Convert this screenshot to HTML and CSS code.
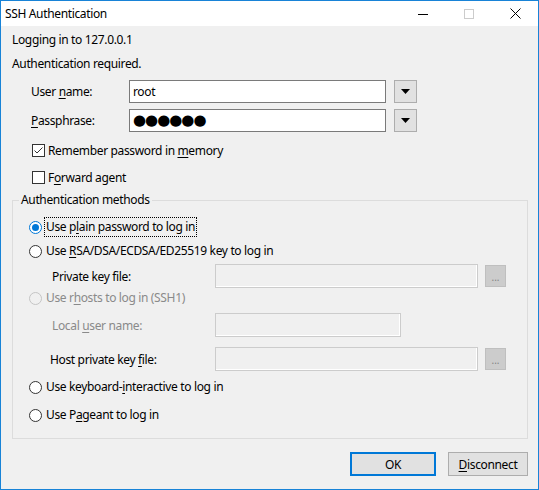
FILE: index.html
```html
<!DOCTYPE html>
<html lang="en">
<head>
    <meta charset="UTF-8">
    <title>SSH Authentication</title>
    <link rel="stylesheet" href="styles.css">
</head>
<body>
    <div class="window">
        <div class="titlebar">
            <span class="title">SSH Authentication</span>
            <div class="caption-btns">
                <span class="caption-btn">
                    <svg width="10" height="10" viewBox="0 0 10 10"><line x1="0" y1="5.5" x2="10" y2="5.5" stroke="#000" stroke-width="1"/></svg>
                </span>
                <span class="caption-btn">
                    <svg width="10" height="10" viewBox="0 0 10 10"><rect x="0.5" y="0.5" width="9" height="9" fill="none" stroke="#cccccc" stroke-width="1"/></svg>
                </span>
                <span class="caption-btn">
                    <svg width="11" height="11" viewBox="0 0 11 11"><path d="M0.5 0.5 L10.5 10.5 M10.5 0.5 L0.5 10.5" stroke="#000" stroke-width="1"/></svg>
                </span>
            </div>
        </div>

        <div class="content">
            <p class="info">Logging in to 127.0.0.1</p>
            <p class="info">Authentication required.</p>

            <div class="field-row">
                <label class="field-label">User <u>n</u>ame:</label>
                <div class="text-box">root</div>
                <span class="drop-btn"><svg width="9" height="5" viewBox="0 0 9 5"><polygon points="0,0 9,0 4.5,5" fill="#000"/></svg></span>
            </div>
            <div class="field-row second">
                <label class="field-label"><u>P</u>assphrase:</label>
                <div class="text-box secret">●●●●●●</div>
                <span class="drop-btn"><svg width="9" height="5" viewBox="0 0 9 5"><polygon points="0,0 9,0 4.5,5" fill="#000"/></svg></span>
            </div>

            <div class="check-row remember">
                <svg class="check" width="13" height="13" viewBox="0 0 13 13"><rect x="0.5" y="0.5" width="12" height="12" fill="#fff" stroke="#333"/><polyline points="2.5,6.5 5,9 10.5,3.5" fill="none" stroke="#333" stroke-width="1"/></svg>
                <span>Remember password in <u>m</u>emory</span>
            </div>
            <div class="check-row forward">
                <svg class="check" width="13" height="13" viewBox="0 0 13 13"><rect x="0.5" y="0.5" width="12" height="12" fill="#fff" stroke="#333"/></svg>
                <span>F<u>o</u>rward agent</span>
            </div>

            <fieldset class="methods">
                <legend>Authentication methods</legend>

                <div class="radio-row r-plain">
                    <svg class="radio" width="13" height="13" viewBox="0 0 13 13"><circle cx="6.5" cy="6.5" r="6" fill="#fff" stroke="#0078d7"/><circle cx="6.5" cy="6.5" r="3.5" fill="#0078d7"/></svg>
                    <span class="radio-label focused">Use p<u>l</u>ain password to log in</span>
                </div>
                <div class="radio-row r-key">
                    <svg class="radio" width="13" height="13" viewBox="0 0 13 13"><circle cx="6.5" cy="6.5" r="6" fill="#fff" stroke="#333"/></svg>
                    <span class="radio-label">Use <u>R</u>SA/DSA/ECDSA/ED25519 key to log in</span>
                </div>
                <div class="sub-row r-keyfile">
                    <span class="sub-label">Private key file:</span>
                    <div class="dim-box wide"></div>
                    <span class="browse-btn">...</span>
                </div>
                <div class="radio-row r-rhosts disabled">
                    <svg class="radio" width="13" height="13" viewBox="0 0 13 13"><circle cx="6.5" cy="6.5" r="6" fill="#f0f0f0" stroke="#c4c4c4"/></svg>
                    <span class="radio-label">Use r<u>h</u>osts to log in (SSH1)</span>
                </div>
                <div class="sub-row r-local disabled">
                    <span class="sub-label">Local <u>u</u>ser name:</span>
                    <div class="dim-box short"></div>
                </div>
                <div class="sub-row r-host">
                    <span class="sub-label host">Host private key <u>f</u>ile:</span>
                    <div class="dim-box wide"></div>
                    <span class="browse-btn">...</span>
                </div>
                <div class="radio-row r-kbd">
                    <svg class="radio" width="13" height="13" viewBox="0 0 13 13"><circle cx="6.5" cy="6.5" r="6" fill="#fff" stroke="#333"/></svg>
                    <span class="radio-label">Use keyboard-<u>i</u>nteractive to log in</span>
                </div>
                <div class="radio-row r-pageant">
                    <svg class="radio" width="13" height="13" viewBox="0 0 13 13"><circle cx="6.5" cy="6.5" r="6" fill="#fff" stroke="#333"/></svg>
                    <span class="radio-label">Use P<u>a</u>geant to log in</span>
                </div>
            </fieldset>

            <div class="actions">
                <button class="btn default">OK</button>
                <button class="btn"><u>D</u>isconnect</button>
            </div>
        </div>
    </div>
</body>
</html>
```

FILE: styles.css
```css
body {
  margin: 0;
  font-family: "Noto Sans", "Open Sans", sans-serif;
  font-size: 12px;
  letter-spacing: -0.35px;
  color: #000;
}

.window {
  width: 539px;
  height: 490px;
  box-sizing: border-box;
  border: 1px solid #1883d7;
  background-color: #f0f0f0;
  display: flex;
  flex-direction: column;
}

u {
  text-decoration-thickness: 1px;
  text-underline-offset: 2px;
}

/* title bar */

.titlebar {
  height: 25px;
  background-color: #fff;
  display: flex;
  align-items: center;
}

.title {
  padding-left: 4px;
  flex: 1;
}

.caption-btns {
  display: flex;
  height: 100%;
}

.caption-btn {
  width: 46px;
  display: flex;
  align-items: center;
  justify-content: center;
}

/* dialog body */

.content {
  padding: 2px 10px 0 11px;
  display: flex;
  flex-direction: column;
}

.info {
  margin: 0;
  height: 24px;
  line-height: 24px;
}

.field-row {
  display: flex;
  align-items: center;
  height: 23px;
  margin-top: 4px;
}

.field-row.second {
  margin-top: 6px;
}

.field-label {
  width: 98px;
  margin-left: 19px;
}

.text-box {
  width: 257px;
  height: 23px;
  box-sizing: border-box;
  border: 1px solid #7a7a7a;
  background-color: #fff;
  padding: 0 3px;
  line-height: 21px;
}

.text-box.secret {
  font-family: "DejaVu Sans", sans-serif;
  font-size: 15px;
  letter-spacing: -1px;
}

.drop-btn {
  width: 23px;
  height: 23px;
  box-sizing: border-box;
  margin-left: 8px;
  border: 1px solid #adadad;
  background-color: #e1e1e1;
  display: flex;
  align-items: center;
  justify-content: center;
}

.check-row {
  display: flex;
  align-items: center;
  height: 20px;
  padding-left: 20px;
}

.check-row.remember {
  margin-top: 8px;
}

.check-row.forward {
  margin-top: 7px;
}

.check {
  margin-right: 3px;
}

/* authentication methods group */

.methods {
  margin: 5px 0 0;
  padding: 7px 0 13px 16px;
  border: 1px solid #dcdcdc;
  min-width: 0;
}

.methods legend {
  margin-left: -10px;
  padding: 0 2px;
  line-height: 16px;
}

.radio-row {
  display: flex;
  align-items: center;
  height: 20px;
}

.radio {
  margin-right: 2px;
}

.radio-label {
  border: 1px dotted transparent;
  padding: 0 1px;
  line-height: 18px;
}

.radio-label.focused {
  border-color: #000;
}

.r-plain { height: 24px; }
.r-key { height: 24px; }
.r-keyfile { margin-top: 1px; }
.r-local { margin-top: 5px; }
.r-host { margin-top: 10px; }
.r-kbd { margin-top: 6px; }
.r-pageant { margin-top: 8px; }

.disabled {
  color: #8a8a8a;
}

.sub-row {
  display: flex;
  align-items: center;
  height: 24px;
}

.sub-label {
  width: 163px;
  margin-left: 23px;
}

.sub-label.host {
  width: 165px;
  margin-left: 21px;
}

.dim-box {
  height: 24px;
  box-sizing: border-box;
  border: 1px solid #cccccc;
  box-shadow: inset -1px -1px 0 #fff;
  background-color: #f0f0f0;
}

.dim-box.wide {
  width: 263px;
}

.dim-box.short {
  width: 186px;
}

.browse-btn {
  width: 21px;
  height: 22px;
  box-sizing: border-box;
  margin-left: 7px;
  border: 1px solid #bfbfbf;
  background-color: #cccccc;
  color: #838383;
  font-size: 10px;
  letter-spacing: 0;
  line-height: 22px;
  text-align: center;
}

/* bottom buttons */

.actions {
  display: flex;
  justify-content: flex-end;
  gap: 12px;
  margin-top: 13px;
}

.btn {
  height: 24px;
  width: 80px;
  box-sizing: border-box;
  border: 1px solid #adadad;
  background-color: #e1e1e1;
  font-family: inherit;
  font-size: 12px;
  letter-spacing: -0.35px;
  padding: 0;
  color: #000;
}

.btn.default {
  width: 86px;
  border: 2px solid #0078d7;
}
```
